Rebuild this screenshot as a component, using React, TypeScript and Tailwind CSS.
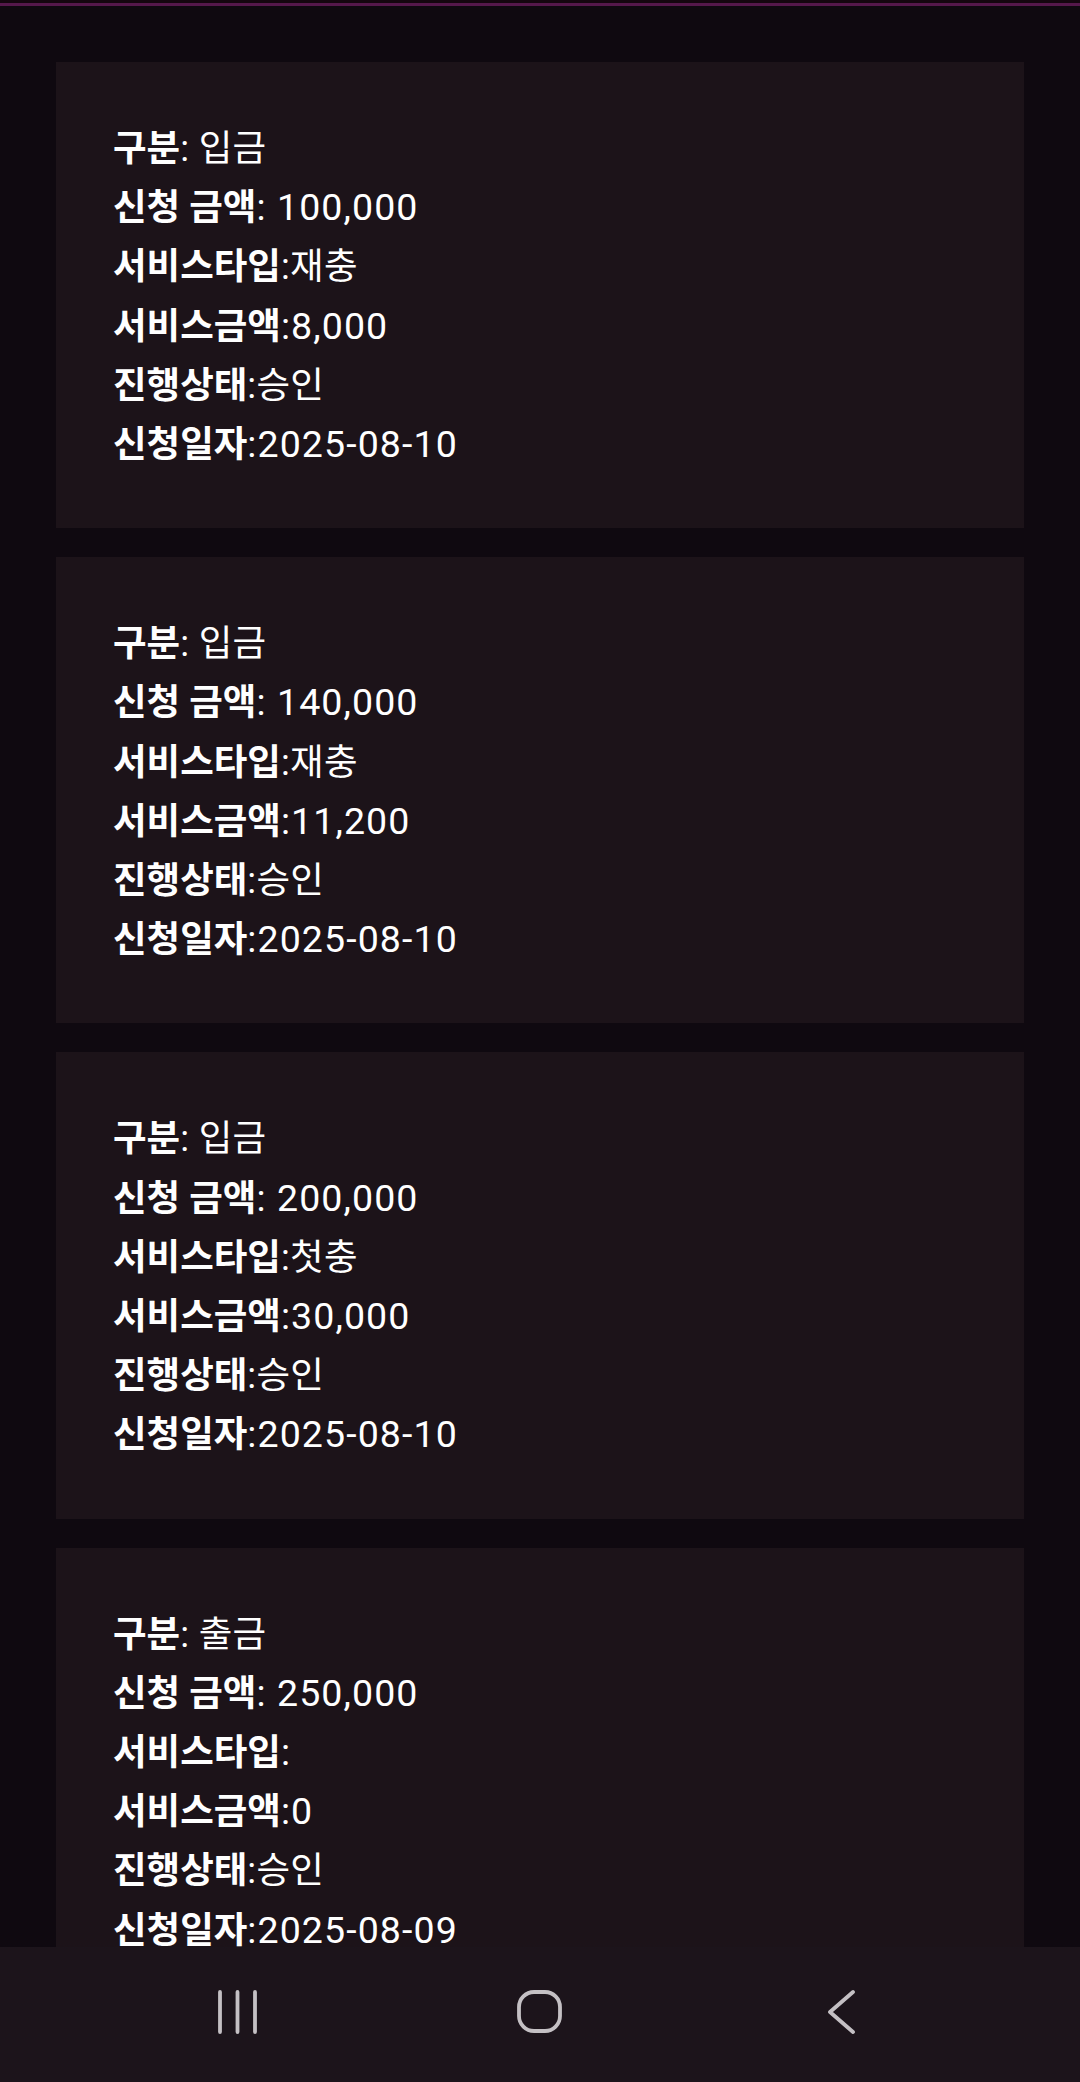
import React from "react";

type Row = { label: string; value: string };

const cards: Row[][] = [
  [
    { label: "구분", value: ": 입금" },
    { label: "신청 금액", value: ": 100,000" },
    { label: "서비스타입", value: ":재충" },
    { label: "서비스금액", value: ":8,000" },
    { label: "진행상태", value: ":승인" },
    { label: "신청일자", value: ":2025-08-10" },
  ],
  [
    { label: "구분", value: ": 입금" },
    { label: "신청 금액", value: ": 140,000" },
    { label: "서비스타입", value: ":재충" },
    { label: "서비스금액", value: ":11,200" },
    { label: "진행상태", value: ":승인" },
    { label: "신청일자", value: ":2025-08-10" },
  ],
  [
    { label: "구분", value: ": 입금" },
    { label: "신청 금액", value: ": 200,000" },
    { label: "서비스타입", value: ":첫충" },
    { label: "서비스금액", value: ":30,000" },
    { label: "진행상태", value: ":승인" },
    { label: "신청일자", value: ":2025-08-10" },
  ],
  [
    { label: "구분", value: ": 출금" },
    { label: "신청 금액", value: ": 250,000" },
    { label: "서비스타입", value: ":" },
    { label: "서비스금액", value: ":0" },
    { label: "진행상태", value: ":승인" },
    { label: "신청일자", value: ":2025-08-09" },
  ],
];

const hasKorean = (s: string) => /[\uac00-\ud7a3]/.test(s);

export default function App() {
  return (
    <div
      className="w-[1080px] h-[2082px] flex flex-col bg-[#0f0910] overflow-hidden text-white"
      style={{ fontFamily: 'Roboto, "Noto Sans CJK KR", sans-serif' }}
    >
      <div className="h-[3px] bg-[#14060f] shrink-0" />
      <div className="h-[3px] bg-[#55184b] shrink-0" />
      <div className="flex-1 overflow-hidden px-[56px] pt-[56px] flex flex-col gap-[29px]">
        {cards.map((rows, i) => (
          <div key={i} className="shrink-0 bg-[#1c1319] px-[57px] pt-[57px] pb-[54px] flex flex-col">
            {rows.map((r, j) => (
              <div key={j} className="text-[36.5px] leading-[59.2px] whitespace-pre">
                <span className="font-bold">{r.label}</span>
                <span
                  className={
                    hasKorean(r.value)
                      ? "font-normal text-[36.5px] tracking-[0.3px]"
                      : "font-normal text-[37.5px] tracking-[1.1px]"
                  }
                >
                  {r.value}
                </span>
              </div>
            ))}
          </div>
        ))}
      </div>
      <div className="h-[135px] shrink-0 bg-[#1c141b] flex items-center justify-center gap-[222px] pb-[5px]">
        <div className="w-[80px] flex justify-center">
          <svg width="44" height="46" viewBox="0 0 44 46">
            <g stroke="#c4c0c4" strokeWidth="3.8" strokeLinecap="round">
              <line x1="4" y1="3" x2="4" y2="43" />
              <line x1="21.5" y1="3" x2="21.5" y2="43" />
              <line x1="39" y1="3" x2="39" y2="43" />
            </g>
          </svg>
        </div>
        <div className="w-[80px] flex justify-center">
          <svg width="46" height="44" viewBox="0 0 46 44">
            <rect x="2" y="2" width="41" height="39" rx="15" fill="none" stroke="#c4c0c4" strokeWidth="3.8" />
          </svg>
        </div>
        <div className="w-[80px] flex justify-center">
          <svg width="32" height="46" viewBox="0 0 32 46">
            <polyline points="27,3 4,23 27,43" fill="none" stroke="#c4c0c4" strokeWidth="3.8" strokeLinecap="round" strokeLinejoin="round" />
          </svg>
        </div>
      </div>
    </div>
  );
}
